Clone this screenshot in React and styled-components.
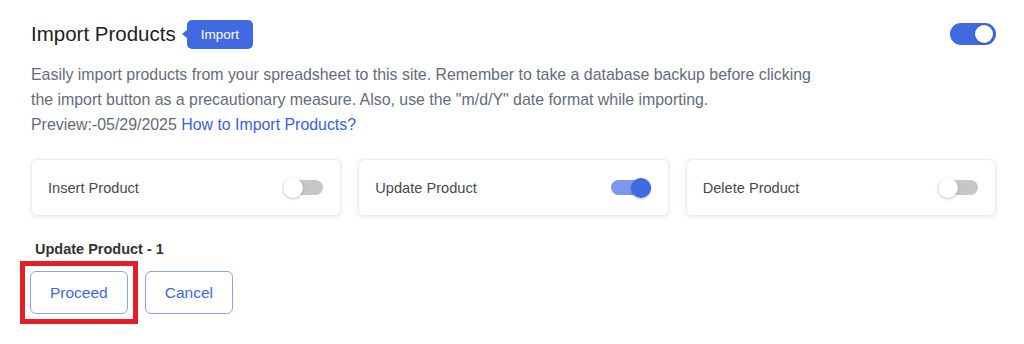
import React, { useState } from "react";
import styled, { createGlobalStyle } from "styled-components";

const GlobalStyle = createGlobalStyle`
  body {
    margin: 0;
    background: #fff;
    font-family: "Liberation Sans", Arial, sans-serif;
  }
`;

const Page = styled.div`
  width: 1024px;
  height: 344px;
  box-sizing: border-box;
  padding: 19px 28px 0 31px;
  background: #fff;
`;

const Header = styled.div`
  display: flex;
  align-items: center;
  justify-content: space-between;
  height: 30px;
`;

const TitleWrap = styled.div`
  display: flex;
  align-items: center;
  gap: 11px;
`;

const Title = styled.h2`
  margin: 0;
  font-size: 20.5px;
  font-weight: 400;
  color: #222;
`;

const Badge = styled.span`
  position: relative;
  display: inline-flex;
  align-items: center;
  height: 29px;
  padding: 0 14px;
  border-radius: 5px;
  background: #4169e1;
  color: #fff;
  font-size: 13.5px;

  &::before {
    content: "";
    position: absolute;
    left: -5px;
    top: 50%;
    transform: translateY(-50%);
    border-top: 5px solid transparent;
    border-bottom: 5px solid transparent;
    border-right: 6px solid #4169e1;
  }
`;

const Track = styled.button`
  position: relative;
  flex: none;
  padding: 0;
  border: none;
  cursor: pointer;
  width: ${p => p.w}px;
  height: ${p => p.h}px;
  border-radius: ${p => p.h / 2}px;
  background: ${p => (p.on ? p.onBg : "#c6c6c6")};
`;

const Knob = styled.span`
  position: absolute;
  top: 50%;
  transform: translateY(-50%);
  width: ${p => p.size}px;
  height: ${p => p.size}px;
  border-radius: 50%;
  left: ${p => p.left}px;
  background: ${p => p.bg};
  box-shadow: 0 1px 3px rgba(0, 0, 0, 0.25);
`;

const Description = styled.div`
  margin-top: 13px;
  max-width: 795px;
  font-size: 15.9px;
  line-height: 25px;
  color: #646c7a;
`;

const Link = styled.a`
  color: #3b5fe0;
  text-decoration: none;
`;

const Cards = styled.div`
  display: grid;
  grid-template-columns: repeat(3, 1fr);
  gap: 17px;
  margin-top: 22px;
  width: 965px;
`;

const Card = styled.div`
  display: flex;
  align-items: center;
  justify-content: space-between;
  height: 57px;
  box-sizing: border-box;
  padding: 0 17px 0 16px;
  border: 1px solid #ececf0;
  border-radius: 6px;
  background: #fff;
  box-shadow: 0 1px 4px rgba(60, 70, 90, 0.12);
`;

const CardLabel = styled.span`
  font-size: 14.6px;
  color: #4a4a4a;
`;

const Summary = styled.div`
  margin: 25px 0 0 4px;
  font-size: 14.5px;
  font-weight: 700;
  color: #333;
`;

const Actions = styled.div`
  display: flex;
  align-items: center;
  gap: 7px;
  margin: 4px 0 0 -11px;
`;

const Highlight = styled.div`
  border: 5px solid #e41e26;
  padding: 5px;
`;

const Button = styled.button`
  height: 43px;
  padding: 0 ${p => p.pad}px;
  border: 1px solid #8ea3ef;
  border-radius: 6px;
  background: #fff;
  color: #4169e1;
  font-family: "Liberation Sans", Arial, sans-serif;
  font-size: 15.5px;
  cursor: pointer;
`;

function Switch({ on, onChange, size }) {
  const s =
    size === "lg"
      ? { w: 46, h: 22, k: 18, onBg: "#4169e1", knobOn: "#fff" }
      : { w: 40, h: 15, k: 20, onBg: "#7c97ec", knobOn: "#4169e1" };
  const offLeft = size === "lg" ? 2 : 0;
  const onLeft = s.w - s.k - (size === "lg" ? 3 : 0);
  return (
    <Track
      w={s.w}
      h={s.h}
      on={on ? 1 : 0}
      onBg={s.onBg}
      onClick={() => onChange(!on)}
    >
      <Knob
        size={s.k}
        left={on ? onLeft : offLeft}
        bg={on ? s.knobOn : "#fff"}
      />
    </Track>
  );
}

export default function App() {
  const [enabled, setEnabled] = useState(true);
  const [opts, setOpts] = useState({ insert: false, update: true, del: false });
  const items = [
    { key: "insert", label: "Insert Product" },
    { key: "update", label: "Update Product" },
    { key: "del", label: "Delete Product" },
  ];

  return (
    <Page>
      <GlobalStyle />
      <Header>
        <TitleWrap>
          <Title>Import Products</Title>
          <Badge>Import</Badge>
        </TitleWrap>
        <Switch size="lg" on={enabled} onChange={setEnabled} />
      </Header>
      <Description>
        Easily import products from your spreadsheet to this site. Remember to
        take a database backup before clicking the import button as a
        precautionary measure. Also, use the "m/d/Y" date format while
        importing.
        <br />
        Preview:-05/29/2025 <Link href="#">How to Import Products?</Link>
      </Description>
      <Cards>
        {items.map(it => (
          <Card key={it.key}>
            <CardLabel>{it.label}</CardLabel>
            <Switch
              on={opts[it.key]}
              onChange={v => setOpts({ ...opts, [it.key]: v })}
            />
          </Card>
        ))}
      </Cards>
      <Summary>Update Product - 1</Summary>
      <Actions>
        <Highlight>
          <Button pad={19}>Proceed</Button>
        </Highlight>
        <Button pad={19}>Cancel</Button>
      </Actions>
    </Page>
  );
}
